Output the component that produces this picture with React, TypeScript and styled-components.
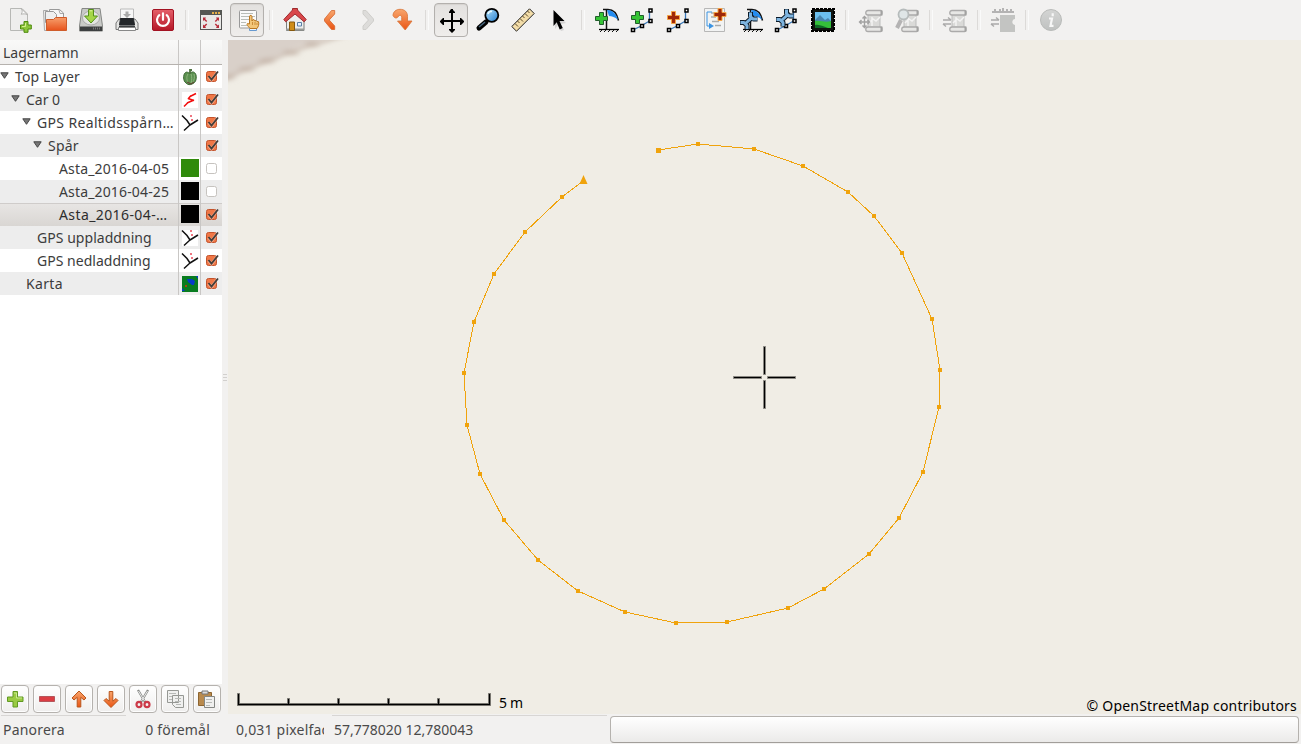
import React from "react";
import styled, { createGlobalStyle, css } from "styled-components";

const GlobalStyle = createGlobalStyle`
  * { box-sizing: border-box; }
  body { margin: 0; background: #f2f1f0; color: #3c3c3c; font: 14px "Noto Sans", "Open Sans", sans-serif; overflow: hidden; }
`;

const Window = styled.div`
  width: 1301px; height: 744px; display: flex; flex-direction: column; background: #f2f1f0;
`;
const Toolbar = styled.div`
  height: 40px; flex: none; display: flex; align-items: center; padding-left: 1px;
`;
const ToolButton = styled.div<{ $pressed?: boolean }>`
  width: 34px; height: 34px; margin: 0 1px; flex: none; display: flex; align-items: center; justify-content: center;
  border: 1px solid transparent; border-radius: 4px;
  ${(p) => p.$pressed && css`border-color: #b3b0ad; background: linear-gradient(#e3e1df, #efedeb); box-shadow: inset 0 1px 1px #d5d3d0;`}
`;
const Separator = styled.div`
  width: 12px; height: 20px; flex: none; display: flex; justify-content: center;
  &::before { content: ""; width: 2px; height: 20px; border-left: 1px solid #dcdad8; border-right: 1px solid #fafafa; }
`;
const Icon = styled.svg`display: block; flex: none; overflow: visible;`;
const Faded = styled.g`opacity: .5;`;

const Main = styled.div`display: flex; height: 674px; flex: none;`;
const Sidebar = styled.div`width: 222px; flex: none; display: flex; flex-direction: column; background: #fff;`;
const Divider = styled.div`
  width: 6px; flex: none; display: flex; flex-direction: column; align-items: center; justify-content: center;
  &::before { content: ""; width: 4px; height: 7px; background: repeating-linear-gradient(#d2d0ce 0 1px, transparent 1px 3px); }
`;
const HeaderRow = styled.div`
  height: 25px; display: grid; grid-template-columns: 179px 22px 21px; background: linear-gradient(#f9f9f8, #f0efee);
  border-bottom: 1px solid #b6b2ae;
`;
const TreeRow = styled.div<{ $tone: "plain" | "alt" | "selected" }>`
  height: 23px; display: grid; grid-template-columns: 179px 22px 21px;
  background: ${(p) => (p.$tone === "plain" ? "#fff" : p.$tone === "alt" ? "#ededed" : "linear-gradient(#e8e6e4, #d9d6d3)")};
  ${(p) => p.$tone === "selected" && css`box-shadow: inset 0 1px #cfccca; color: #2d2d2d;`}
`;
const Cell = styled.div<{ $center?: boolean; $indent?: number; $last?: boolean }>`
  display: flex; align-items: center; min-width: 0; border-right: 1px solid ${(p) => (p.$last ? "transparent" : "#c9c7c5")};
  padding-left: ${(p) => p.$indent ?? 0}px; justify-content: ${(p) => (p.$center ? "center" : "flex-start")};
`;
const HeaderCell = styled(Cell)`padding-top: 1px;`;
const Twisty = styled.span`
  width: 9px; height: 7px; margin: 0 6px 3px 0; flex: none; display: flex;
`;
const Label = styled.span<{ $track?: number }>`
  white-space: pre; line-height: 20px; letter-spacing: ${(p) => p.$track ?? 0}px;
`;
const Swatch = styled.div<{ $color: string }>`width: 18px; height: 18px; margin-bottom: 1px; background: ${(p) => p.$color};`;
const Filler = styled.div`flex: 1;`;
const LayerActions = styled.div`height: 30px; display: flex; gap: 4px; padding: 1px; background: #f2f1f0; align-items: flex-start;`;
const ActionButton = styled.div`
  width: 28px; height: 28px; display: flex; align-items: center; justify-content: center; flex: none;
  border: 1px solid #b5b2ae; border-radius: 4px; background: linear-gradient(#fff, #efeeed); box-shadow: inset 0 0 0 1px #fdfdfd;
`;
const MapView = styled.div`position: relative; flex: 1; background: #f0ede5; overflow: hidden; color: #000;`;
const Drawing = styled.svg`display: block;`;
const ScaleText = styled.div`position: absolute; left: 271px; top: 653px;`;
const Attribution = styled.div`position: absolute; right: 4px; top: 656px;`;
const StatusBar = styled.div`height: 30px; display: flex; color: #4a4a4a;`;
const StatusCell = styled.div<{ $w: number; $pad?: number; $line?: number; $end?: boolean }>`
  width: ${(p) => p.$w}px; flex: none; padding: 6px 0 0 ${(p) => p.$pad ?? 0}px; overflow: hidden; display: flex;
  justify-content: ${(p) => (p.$end ? "flex-end" : "flex-start")};
  background: linear-gradient(#d8d6d4, #d8d6d4) 100% 1px / ${(p) => p.$line ?? 0}px 1px no-repeat;
`;
const Progress = styled.div`
  width: 689px; height: 27px; margin: 2px 0 0 3px; flex: none; border: 1px solid #b5b2ae; border-bottom-color: #a29e9a; border-radius: 4px;
  background: linear-gradient(#fff, #ebeae9);
`;

/* Toolbar artwork, every icon on a 24 x 24 grid */
const NewDoc = () => (
  <>
    <path d="M3.500.5H15l5.500 5.500V22.500h-17z" fill="#eeeeed" stroke="#b7b8b5" />
    <path d="M14.500.8c1 2 1 3-.2 5.500 2-.7 4-.5 5.800.2z" fill="#fff" stroke="#b3b3b0" />
    <path d="M17 13.500h4V17h3.300v4H21v3.300h-4V21h-3.500v-4H17z" fill="#8cc63b" stroke="#4e8a0c" />
    <path d="M18.500 15v3.500H15" fill="none" stroke="#d6f08e" />
  </>
);
const Folder = () => (
  <>
    <path d="M.5 2.500h4v20h-3z" fill="#f0efee" stroke="#aaa" />
    <path d="M6.500 1.500h10l4 3.500v8h-14z" fill="#f6f6f6" stroke="#999" />
    <path d="M2.500 3.500h8l3 3v8h-11z" fill="#efefef" stroke="#999" />
    <path d="M16 2l1 3.500h3" fill="none" stroke="#aaa" />
    <path d="M3.500 11.500h7l2-2h11V22.500h-20z" fill="url(#folder)" stroke="#cf5c2a" />
  </>
);
const SaveDisk = () => (
  <>
    <path d="M3 .5h18l2.500 17.500v5H.5v-5z" fill="#c9cac7" stroke="#858784" />
    <path d="M1 18.500h22v4.500H1z" fill="#3d3f40" />
    <path d="M14 20.500h7" stroke="#777" strokeWidth="2" strokeDasharray="1 1" />
    <ellipse cx="12" cy="10" rx="8.500" ry="7" fill="#e4e5e2" stroke="#aaa" />
    <path d="M9.500 1.500h5v6.500h4L12 15 5.500 8h4z" fill="#a5d648" stroke="#55901a" />
    <path d="M10.700 2.800h2.500" stroke="#dff5a4" />
  </>
);
const Printer = () => (
  <>
    <path d="M5.500 1h13v11h-13z" fill="#f7f7f7" stroke="#bbb" />
    <path d="M10.500 3.500h3V6h2.500l-4 4-4-4h2.500z" fill="#aaa" />
    <path d="M4 11h16l3 4v6.500H1V15z" fill="#e6e6e4" stroke="#777" />
    <path d="M5.500 10.500h13l1 6.500h-15z" fill="#24272a" stroke="#24272a" />
    <path d="M4 18.500h16" stroke="#3b3e40" strokeWidth="1.500" />
    <path d="M3.500 19.500h17v3h-17z" fill="#fff" stroke="#888" />
  </>
);
const Power = () => (
  <>
    <rect x="1.500" y="1.500" width="21" height="21" rx="1.500" fill="url(#power)" stroke="#a31222" />
    <path d="M8.300 7.200a6 6 0 1 0 7.400 0M12 5.300v6.500" fill="none" stroke="#fff" strokeWidth="2.200" strokeLinecap="round" />
  </>
);
const FullScreen = () => (
  <>
    <rect x="1.500" y="2.500" width="21" height="19" fill="#e9e9e7" stroke="#555" />
    <path d="M1 2h22v5H1z" fill="#555753" />
    <path d="M13 5h8.500" stroke="#e5b04a" strokeWidth="2" strokeDasharray="2 1" />
    <path d="M4 9.500h3L6.200 11l2 2-1 1-2-2-1.200 1zM20 9.500h-3l.8 1.500-2 2 1 1 2-2 1.200 1zM4 20h3l-.8-1.500 2-2-1-1-2 2L4 16.500zM20 20h-3l.8-1.500-2-2 1-1 2 2 1.200-1z" fill="#b72d3a" />
  </>
);
const ListHand = () => (
  <>
    <rect x="4.500" y="2.500" width="17" height="17.500" rx="1" fill="#fafafa" stroke="#999" />
    <path d="M6 5.500h12M6 8.500h14M6 11.500h8M6 14.500h5M6 17.500h6" stroke="#b9bdb8" />
    <path d="M14.500 20.500h7v2h-7z" fill="#eef5ff" stroke="#6799cf" />
    <path d="M15 7.500c1.500-.5 2 .5 2 1.500v4l1-1.500 1.500.5.500 1 1-.5 1 1 1.500.2c.8 3-.3 5-1.500 6.800h-7c-1.500-2-4-4-2.500-5l2 .5V9c0-.7 0-1.200.5-1.500z" fill="#f3c679" stroke="#b97620" />
    <path d="M17.500 14v3M20 14v3M22 15v2" stroke="#b97620" strokeWidth=".7" />
  </>
);
const Home = () => (
  <>
    <path d="M3.500 11.500L12 4l9 7.500v11h-17.500z" fill="#eeeeec" stroke="#7b7d7a" />
    <path d="M3 20.500h18v2H3z" fill="#999b97" />
    <path d="M.8 11.500L9.500 2V.5h5V2l8.700 9.500-2 2.300L12 6l-9.300 7.800z" fill="#d9474a" stroke="#9e2b2e" />
    <path d="M6.500 14h5v8.500h-5z" fill="#cf8d18" stroke="#87590e" />
    <path d="M14.500 14.500h4v3.500h-4z" fill="#e9f2fb" stroke="#5b7fa7" />
  </>
);
const Back = () => <path d="M12.500 2.500h3.200v3.500l-5.500 6 5.500 6v3.500h-3.200L5.500 13v-2z" fill="url(#orange)" stroke="#d5642c" strokeWidth=".8" strokeLinejoin="round" />;
const Forward = () => <path d="M8 2.500h3l7.500 8.500v2L11 21.500H8v-3.500l5.500-6L8 6z" fill="#dddcda" stroke="#cfcecb" strokeLinejoin="round" />;
const Jump = () => <path d="M2 7.500c0-3.500 3-6.200 7-6.200 5 0 7.500 3 7.500 7V13h4.500l-6.800 9L6.500 13h4.200V9.500c0-2.500-2.500-2.800-3.500-.8-1.500 2-4 1.700-5.200-1.200z" fill="url(#orange)" stroke="#d77437" strokeWidth=".8" strokeLinejoin="round" />;
const Move = () => <path d="M12 1h2v1l2 2v1h-2v7h7v-2h1l3 3v1l-3 3h-1v-3h-7v7h2v1l-3 3-3-3v-1h2v-7H5v3H4l-3-3v-1l3-3h1v2h7V5h-2V4z" fill="#000" />;
const Magnifier = () => (
  <>
    <path d="M11 14l-7 6" stroke="#000" strokeWidth="5" strokeLinecap="round" />
    <path d="M10 14l-6 5" stroke="#46657d" strokeWidth="1.500" />
    <circle cx="16.800" cy="7.300" r="6.500" fill="url(#lens)" stroke="#000" strokeWidth="1.800" />
    <path d="M13 6c.5-2 2-3 4-2.500" stroke="#e8faff" strokeWidth="1.600" fill="none" />
  </>
);
const Ruler = () => (
  <>
    <path d="M18.500.8l4.700 4.700L5.500 23.200.8 18.500z" fill="#f3dda9" stroke="#222" />
    <path d="M16.500 3l2 2M14 5.500l3 3M11.500 8l2 2M9 10.500l3 3M6.500 13l2 2M4 15.500l3 3" stroke="#5d4a28" />
  </>
);
const Pointer = () => (
  <>
    <path d="M8 4l11 11-5 1 3 6-3 1-3-6-3 4z" fill="#aaa" opacity=".4" />
    <path d="M6.500 2l11 11h-5l3.200 7-3 1.500-3-7.200-3.200 3.700z" fill="#000" />
  </>
);
const Plus = ({ red, x = 0, y = 4 }: { red?: boolean; x?: number; y?: number }) => (
  <path transform={`translate(${x} ${y})`} d="M4.500.5h4v4h4v4h-4v4h-4v-4h-4v-4h4z" fill={red ? "#9e2708" : "#35c435"} stroke={red ? "#f6a442" : "#215d2b"} />
);
const Wrench = ({ y = 0 }: { y?: number }) => (
  <g transform={`translate(0 ${y})`} fill="none" strokeLinejoin="round">
    <path d="M11.500 4v4l3 3h4M1 14.500h4l3 3v4M6 16l7.500-7" stroke="#0c1a28" strokeWidth="5" />
    <path d="M11.500 4.500v4.300l2.500 2.200h4.300M1.500 14.500H5l3 3v3.500M6 16l7.500-7" stroke="#7db4e0" strokeWidth="3" />
  </g>
);
const DigitizeBase = () => (
  <>
    <path d="M11.500 1v20M8 1.500h5c5 0 9 4 10.500 11" fill="none" stroke="#111" strokeWidth="1.500" />
    <path d="M12 2c5 0 9 3 11 10-3-3-6-4-9-4z" fill="#238cf0" />
    <path d="M4 21.500h20" stroke="#000" strokeWidth="1.300" />
    <path d="M7 22l-2 2M11 22l-2 2M15 22l-2 2M19 22l-2 2M23 22l-2 2" stroke="#111" />
  </>
);
const NodePath = () => (
  <>
    <path d="M2 22l8-4 8.500-5V3" fill="none" stroke="#3676b8" strokeWidth="1.300" />
    {[[2, 22], [11, 18], [19.500, 13], [19.500, 2.500]].map(([x, y]) => (
      <rect key={`${x}-${y}`} x={x - 1.5} y={y - 1.5} width="3" height="3" fill="#fff" stroke="#000" strokeWidth="1.500" />
    ))}
  </>
);
const AddMap = () => <><DigitizeBase /><Plus /></>;
const AddTrack = () => <><NodePath /><Plus y={3} /></>;
const AddRoute = () => <><NodePath /><Plus red y={3} /></>;
const AddPage = () => (
  <>
    <path d="M1.500.5h20v23h-20z" fill="#f2f3f3" stroke="#b7b7b7" />
    <path d="M8 5h6M8 9h5M9 13.500h7M12 17.500h6" stroke="#aaa" strokeWidth="1.500" />
    <path d="M9 4H4v14h3" fill="none" stroke="#3c94e2" />
    <path d="M6 15l5 3-5 3z" fill="#3c94e2" />
    <Plus red x={10.5} y={0} />
  </>
);
const EditMap = () => <><DigitizeBase /><Wrench /></>;
const EditTrack = () => <><NodePath /><Wrench y={-3} /></>;
const Picture = () => (
  <>
    <rect x="1" y="1" width="22" height="22" fill="#101510" stroke="#000" strokeWidth="2" strokeDasharray="3 1" />
    <path d="M4 4h16v16H4z" fill="#6cc0ee" />
    <path d="M4 12l5-5 5 5 3-2 3 3v7H4z" fill="#4a86ad" />
    <path d="M4 13c6-1 10 2 16 0v7H4z" fill="#35c03a" />
    <path d="M4 17c5-1 9 2 13 3H4z" fill="#0e6925" />
  </>
);
const Scroll = () => (
  <>
    <path d="M9 6h12v14H9z" fill="#c3c5c2" stroke="#888" />
    <path d="M9 2.500h12.500c2 0 2 4.500 0 4.500H9c-3 0-3-4.500 0-4.500zM9 19h12.500c2 0 2 4.500 0 4.500H9c-3 0-3-4.500 0-4.500z" fill="#dededc" stroke="#666" strokeWidth="1.300" />
    <path d="M10 15l4-4 3 2 4-4M13 9v9" fill="none" stroke="#f6f6f6" strokeWidth="1.500" />
    <path d="M22.500 2.500v5M22.500 18.500v5" stroke="#555" strokeWidth="2" />
  </>
);
const Swap = () => <path d="M0 12h8M0 16h8M5 9.500l3 2.500M3 18.500L0 16" stroke="#666" strokeWidth="1.500" fill="none" />;
const PanScroll = () => <Faded><Scroll /><path d="M.5 14h10M5.500 9v10M3.500 10.500l2-2 2 2M3.500 17.500l2 2 2-2M2.500 12l-2 2 2 2M8.500 12l2 2-2 2" stroke="#555" strokeWidth="1.400" fill="none" /></Faded>;
const FindScroll = () => <Faded><Scroll /><path d="M6 12l-4 8" stroke="#777" strokeWidth="4" /><circle cx="8.500" cy="6.500" r="5" fill="#cddde0" stroke="#7b8788" strokeWidth="1.800" /></Faded>;
const SwapScroll = () => <Faded><Scroll /><Swap /></Faded>;
const SwapBox = () => <Faded><path d="M9 7h15v4c-3 0-4 5 0 6v7H9z" fill="#959995" /><path d="M1 4h22" stroke="#777" strokeWidth="2" /><path d="M4 3V1M12 3V0M9 3V1M16 3V1M20 3V1" stroke="#777" strokeWidth="2" /><Swap /></Faded>;
const Info = () => <><circle cx="12" cy="12" r="10.500" fill="url(#info)" stroke="#b9bbb9" /><path d="M13.700 5.200v3M10 10.500h3l-1.500 7.300h3" stroke="#f7f7f7" strokeWidth="2.200" fill="none" /></>;

type Tool = { art: React.FC; pressed?: boolean };
const tools: (Tool | null)[] = [
  { art: NewDoc }, { art: Folder }, { art: SaveDisk }, { art: Printer }, { art: Power }, null,
  { art: FullScreen }, { art: ListHand, pressed: true }, null,
  { art: Home }, { art: Back }, { art: Forward }, { art: Jump }, null,
  { art: Move, pressed: true }, { art: Magnifier }, { art: Ruler }, { art: Pointer }, null,
  { art: AddMap }, { art: AddTrack }, { art: AddRoute }, { art: AddPage }, { art: EditMap }, { art: EditTrack }, { art: Picture }, null,
  { art: PanScroll }, { art: FindScroll }, null, { art: SwapScroll }, null, { art: SwapBox }, null, { art: Info },
];

const Gradients = () => (
  <Icon width="0" height="0">
    <defs>
      <linearGradient id="folder" x2="0" y2="1"><stop stopColor="#f7a06d" /><stop offset="1" stopColor="#e7521b" /></linearGradient>
      <linearGradient id="power" x2="0" y2="1"><stop stopColor="#e5606a" /><stop offset="1" stopColor="#b51627" /></linearGradient>
      <linearGradient id="orange" x2="0" y2="1"><stop stopColor="#f8a66d" /><stop offset="1" stopColor="#ea5514" /></linearGradient>
      <linearGradient id="lens" x2="1" y2="1"><stop stopColor="#b9e7ff" /><stop offset="1" stopColor="#237ccd" /></linearGradient>
      <linearGradient id="info" x2="0" y2="1"><stop stopColor="#d4d5d4" /><stop offset="1" stopColor="#bfc1c0" /></linearGradient>
    </defs>
  </Icon>
);

/* Layer tree */
const Check = ({ on }: { on: boolean }) => (
  <Icon width="14" height="14" viewBox="0 0 14 14">
    <rect x="1.500" y="1.500" width="10" height="10" rx="2" fill={on ? "#f07746" : "#fff"} stroke={on ? "#c3532c" : "#c6c3bf"} />
    {on && <path d="M3.500 6.500l3 3.500L13 1.500" fill="none" stroke="#fff" strokeWidth="3" opacity=".35" />}
    {on && <path d="M3.500 6l3 3.500L13 1.500" fill="none" stroke="#443e3a" strokeWidth="1.900" />}
  </Icon>
);
const LayerIcon = ({ kind }: { kind: string }) => (
  <Icon width="16" height="16" viewBox="0 0 16 16">
    {kind === "pepper" && <>
      <path d="M3 4c2-2 3 0 5 0 3-2 5-1 6 2 1 5-1 8-4 9-2 1-4 1-6-1C1 12 1 6 3 4z" fill="#5b9150" stroke="#3f6a36" />
      <path d="M6 5c-2 3-1 6 0 9M9 5c1 3 1 6 0 9M12 5c1 3 0 6-1 8" stroke="#90b47e" fill="none" />
      <path d="M8 5V1h2" stroke="#507340" strokeWidth="1.800" fill="none" />
      <path d="M5 13l4 2 3-2" stroke="#653d31" fill="none" />
    </>}
    {kind === "track" && <><path d="M0 0h16v16H0z" fill="#fff" /><path d="M2 14.500l4-4M5 11l7-3M12 8.500L6 6.500M6 7l3-3.500M8 4.500l6-3" fill="none" stroke="#f20c0c" strokeWidth="1.500" /></>}
    {kind === "gps" && <><path d="M0 0h16v16H0z" fill="#fff" /><path d="M0 .5l5 5 3 4.500L2 15.500M8 10l8-5" fill="none" stroke="#111" strokeWidth="1.500" /><path d="M8 0h2v2H8zM9 4h2v2H9z" fill="#ee7580" /></>}
    {kind === "map" && <><path d="M0 0h16v16H0z" fill="#087c20" /><path d="M5 3h5l3 2-1 4h-2L6 6zM14 0h2v3zM0 12l3 3H0z" fill="#063aca" /><path d="M3 9h2v2H3z" fill="#a14412" /></>}
  </Icon>
);
type Layer = { name: string; indent: number; open?: boolean; icon?: string; color?: string; on: boolean; tone?: "selected"; track?: number };
const layers: Layer[] = [
  { name: "Top Layer", indent: 0, open: true, icon: "pepper", on: true, track: 0.15 },
  { name: "Car 0", indent: 11, open: true, icon: "track", on: true, track: 0 },
  { name: "GPS Realtidsspårn…", indent: 22, open: true, icon: "gps", on: true, track: 0.35 },
  { name: "Spår", indent: 33, open: true, on: true, track: 0.2 },
  { name: "Asta_2016-04-05", indent: 59, color: "#2f8a0b", on: false, track: 0.15 },
  { name: "Asta_2016-04-25", indent: 59, color: "#000", on: false, track: 0.15 },
  { name: "Asta_2016-04-…", indent: 59, color: "#000", on: true, tone: "selected", track: 0.4 },
  { name: "GPS uppladdning", indent: 37, icon: "gps", on: true, track: 0.04 },
  { name: "GPS nedladdning", indent: 37, icon: "gps", on: true, track: 0.02 },
  { name: "Karta", indent: 26, icon: "map", on: true, track: 0.35 },
];

const actions = [
  <><path d="M7 1.500h4.500V7H17v4.500h-5.500V17H7v-5.500H1.500V7H7z" fill="#9acb43" stroke="#619922" /><path d="M8 3h2.500v5H16" fill="none" stroke="#c9e98d" /></>,
  <path d="M1.500 6.500h15v5h-15z" fill="#db3d43" stroke="#b5565b" />,
  <path d="M9 1l7 7-2 2-3.200-2.700V17H7.200V7.300L4 10 2 8z" fill="url(#orange)" stroke="#b9561c" strokeLinejoin="round" />,
  <path d="M9 17.500l7-7-2-2-3.200 2.700V1.500H7.200v9.700L4 8.500l-2 2z" fill="url(#orange)" stroke="#b9561c" strokeLinejoin="round" />,
  <><path d="M4 0l7 12M14 0L7 12" stroke="#858784" strokeWidth="2.300" /><path d="M4.500 1l6 10M13.500 1l-6 10" stroke="#eee" /><ellipse cx="5" cy="14.500" rx="2.500" ry="2.700" fill="none" stroke="#cc3a48" strokeWidth="2.200" /><ellipse cx="13" cy="14.500" rx="2.500" ry="2.700" fill="none" stroke="#cc3a48" strokeWidth="2.200" /></>,
  <><path d="M1.500.5h11v12h-11zM6.500 5.500h11v12h-8l-3-3z" fill="#f0f0ef" stroke="#969894" /><path d="M3 3.500h7M3 6.500h3M3 9.500h3M9 8.500h6M9 11.500h6M10 14.500h5" stroke="#b8bab7" /></>,
  <><path d="M.5 2.500h13v13H.5z" fill="#b98a4d" stroke="#8d6530" /><path d="M4 4V1h6v3z" fill="#ddd" stroke="#777" /><path d="M6.500 6.500h10v11h-10z" fill="#f0f0ef" stroke="#858784" /><path d="M8 9.500h6M8 12.500h6M8 15.500h4" stroke="#b8bab7" /></>,
];

/* GPS track in map coordinates */
const track: [number, number][] = [
  [430, 110], [470, 104], [526, 109], [575, 126], [620, 152], [646, 176], [674, 213], [704, 279], [712, 330], [711, 367],
  [695, 432], [671, 478], [641, 514], [596, 549], [560, 568], [499, 582], [448, 583], [397, 572], [350, 551], [310, 520],
  [276, 480], [252, 434], [239, 385], [236, 333], [246, 282], [266, 234], [297, 192], [334, 157], [355, 141],
];

const MapDrawing = () => (
  <Drawing width="1073" height="674">
    <defs><filter id="soft" x="-20%" y="-50%" width="140%" height="200%"><feGaussianBlur stdDeviation="3 2" /></filter></defs>
    <g filter="url(#soft)">
      <path d="M-20-20H140L100-3 64 9 35 23 0 40-20 46z" fill="#d9d0c9" />
      <path d="M-8 39L6 36M12 30L26 28M32 22L46 20M56 13L70 12M78 5L90 4M102-4L113-5" fill="none" stroke="#c0afa1" strokeWidth="6" opacity=".75" />
      <path d="M-8 41L18 29 42 21 62 12 88 4 120-6" fill="none" stroke="#cdc0b5" strokeWidth="3" />
    </g>
    <polyline points={track.map((p) => p.join()).join(" ")} fill="none" stroke="#f0a30c" shapeRendering="crispEdges" />
    {track.slice(0, -1).map(([x, y], i) => <rect key={i} x={x - 2} y={y - 2} width={i ? 4 : 5} height={i ? 4 : 5} fill="#f0a30c" />)}
    <path d="M355.500 135l4 9h-8z" fill="#f0a30c" />
    <g fill="#000" stroke="#898781">
      <path d="M535.500 306.500h2v28h-2zM535.500 340.500h2v28h-2zM505.500 336.500h28v2h-28zM539.500 336.500h28v2h-28z" />
      <path d="M9.500 653.500h2v10h48v-5h2v5h48v-5h2v5h48v-5h2v5h48v-5h2v5h49v-10h2v12H9.500z" stroke="#77756f" />
    </g>
  </Drawing>
);

export default function App() {
  return (
    <Window>
      <GlobalStyle />
      <Toolbar>
        {tools.map((t, i) => t
          ? <ToolButton key={i} $pressed={t.pressed}><Icon width="24" height="24" viewBox="0 0 24 24"><t.art /></Icon></ToolButton>
          : <Separator key={i} />)}
        <Gradients />
      </Toolbar>
      <Main>
        <Sidebar>
          <HeaderRow>
            <HeaderCell $indent={3}><Label>Lagernamn</Label></HeaderCell><Cell /><Cell $last />
          </HeaderRow>
          {layers.map((l, i) => (
            <TreeRow key={i} $tone={l.tone ?? (i % 2 ? "alt" : "plain")}>
              <Cell $indent={l.indent}>
                {l.open && <Twisty><Icon width="9" height="7"><path d="M.8.8h7.400L4.500 6.300z" fill="#777" stroke="#444" /></Icon></Twisty>}
                <Label $track={l.track}>{l.name}</Label>
              </Cell>
              <Cell $center>{l.color ? <Swatch $color={l.color} /> : l.icon && <LayerIcon kind={l.icon} />}</Cell>
              <Cell $center $last $indent={2}><Check on={l.on} /></Cell>
            </TreeRow>
          ))}
          <Filler />
          <LayerActions>
            {actions.map((art, i) => <ActionButton key={i}><Icon width="18" height="18" viewBox="0 0 18 18">{art}</Icon></ActionButton>)}
          </LayerActions>
        </Sidebar>
        <Divider />
        <MapView>
          <MapDrawing />
          <ScaleText><Label $track={-0.3}>5 m</Label></ScaleText>
          <Attribution><Label $track={0.2}>© OpenStreetMap contributors</Label></Attribution>
        </MapView>
      </Main>
      <StatusBar>
        <StatusCell $w={126} $pad={3} $line={125}><Label $track={0.2}>Panorera</Label></StatusCell>
        <StatusCell $w={84} $end><Label $track={0.2}>0 föremål</Label></StatusCell>
        <StatusCell $w={114} $pad={26}><Label $track={0.2}>0,031 pixelfac</Label></StatusCell>
        <StatusCell $w={283} $pad={10} $line={275}><Label>57,778020 12,780043</Label></StatusCell>
        <Progress />
      </StatusBar>
    </Window>
  );
}
